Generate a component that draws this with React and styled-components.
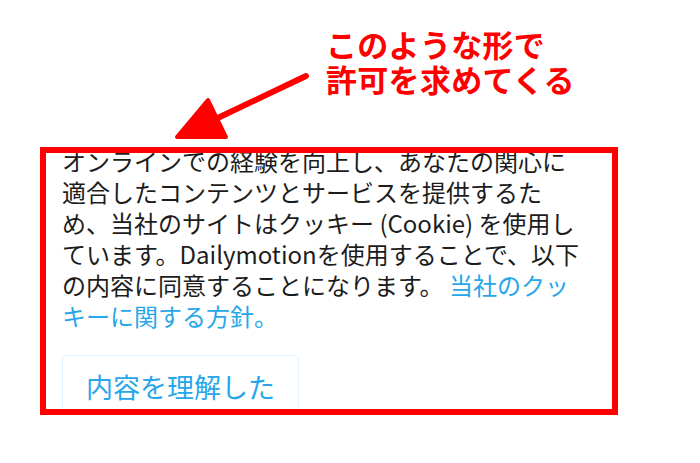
import React from 'react';
import styled, { createGlobalStyle } from 'styled-components';

const GlobalStyle = createGlobalStyle`
  html, body {
    margin: 0;
    padding: 0;
    background: #ffffff;
  }
  body {
    font-family: "Noto Sans CJK JP", "Noto Sans", sans-serif;
  }
`;

const Page = styled.div`
  width: 700px;
  height: 463px;
  overflow: hidden;
  background: #ffffff;
`;

const Annotation = styled.header`
  position: relative;
  height: 147px;
  box-sizing: border-box;
  padding: 26px 0 0 326px;
`;

const Note = styled.div`
  color: #ff0000;
  font-size: 31px;
  font-weight: 700;
  line-height: 35px;
  letter-spacing: 0.3px;
  white-space: nowrap;
`;

const Arrow = styled.svg`
  position: absolute;
  left: 0;
  top: 0;
  width: 700px;
  height: 147px;
  pointer-events: none;
`;

const Main = styled.main`
  padding-left: 40px;
`;

const Frame = styled.section`
  width: 578px;
  height: 268px;
  box-sizing: border-box;
  border: 6px solid #ff0000;
  overflow: hidden;
`;

const Banner = styled.div`
  padding-left: 16px;
`;

const Message = styled.p`
  width: 524px;
  margin: -8px 0 0;
  color: #1c1c1c;
  font-size: 24px;
  line-height: 31px;
`;

const Policy = styled.a`
  color: #27a6ea;
  text-decoration: none;
`;

const AcceptButton = styled.button`
  margin-top: 24px;
  padding: 14px 23px;
  font-family: inherit;
  font-size: 27px;
  line-height: 34px;
  color: #27a6ea;
  background: #ffffff;
  border: 1px solid #e3f2fd;
  border-radius: 4px;
  cursor: pointer;
`;

const App = () => {
  return (
    <Page>
      <GlobalStyle />
      <Annotation>
        <Arrow viewBox="0 0 700 147">
          <line x1="306" y1="76" x2="205" y2="124" stroke="#ff0000" strokeWidth="6" strokeLinecap="round" />
          <polygon
            points="208,100 177,137 226,137"
            fill="#ff0000"
            stroke="#ff0000"
            strokeWidth="4"
            strokeLinejoin="round"
          />
        </Arrow>
        <Note>
          このような形で
          <br />
          許可を求めてくる
        </Note>
      </Annotation>
      <Main>
        <Frame>
          <Banner>
            <Message>
              オンラインでの経験を向上し、あなたの関心に適合したコンテンツとサービスを提供するため、当社のサイトはクッキー (Cookie) を使用しています。Dailymotionを使用することで、以下の内容に同意することになります。{' '}
              <Policy href="#">当社のクッキーに関する方針。</Policy>
            </Message>
            <AcceptButton type="button">内容を理解した</AcceptButton>
          </Banner>
        </Frame>
      </Main>
    </Page>
  );
};

export default App;
